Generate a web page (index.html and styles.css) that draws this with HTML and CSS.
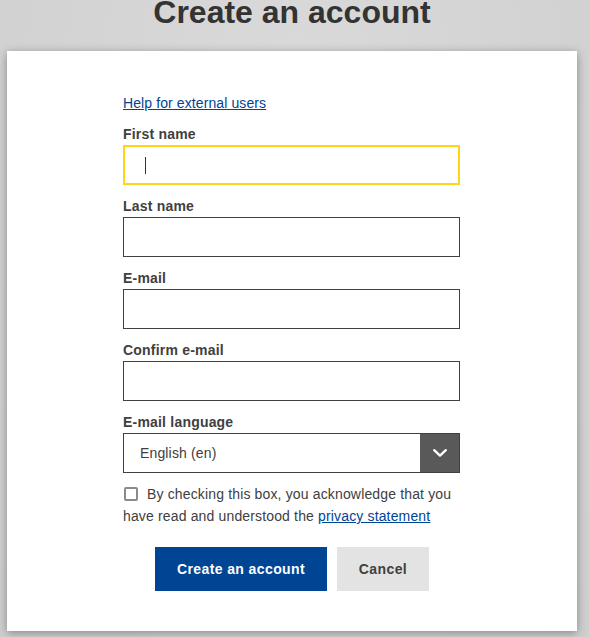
FILE: index.html
```html
<!DOCTYPE html>
<html lang="en">
<head>
<meta charset="utf-8">
<title>Create an account</title>
<link rel="stylesheet" href="styles.css">
</head>
<body>
<div class="page">
  <h1 class="title">Create an account</h1>
  <div class="card">
    <form class="form">
      <a class="help" href="#">Help for external users</a>
      <div class="field">
        <label class="label">First name</label>
        <div class="input focused"><span class="caret"></span></div>
      </div>
      <div class="field">
        <label class="label">Last name</label>
        <div class="input"></div>
      </div>
      <div class="field">
        <label class="label">E-mail</label>
        <div class="input"></div>
      </div>
      <div class="field">
        <label class="label">Confirm e-mail</label>
        <div class="input"></div>
      </div>
      <div class="field">
        <label class="label">E-mail language</label>
        <div class="select">
          <span class="select-value">English (en)</span>
          <span class="select-btn">
            <svg width="14" height="8" viewBox="0 0 14 8"><path d="M1.2 1.2 L7 6.6 L12.8 1.2" fill="none" stroke="#ffffff" stroke-width="2.3" stroke-linecap="round" stroke-linejoin="round"/></svg>
          </span>
        </div>
      </div>
      <p class="consent"><span class="checkbox"></span>By checking this box, you acknowledge that you have read and understood the <a href="#" class="link">privacy statement</a></p>
      <div class="actions">
        <button type="button" class="btn primary">Create an account</button>
        <button type="button" class="btn secondary">Cancel</button>
      </div>
    </form>
  </div>
</div>
</body>
</html>
```
FILE: styles.css
```css
html, body {
  margin: 0;
  padding: 0;
}
body {
  background: radial-gradient(ellipse at 50% 20%, #dadada 0%, #d3d3d3 60%, #cfcfcf 100%);
  font-family: "Liberation Sans", Arial, sans-serif;
  color: #404040;
  height: 637px;
  overflow: hidden;
}
.page {
  width: 570px;
  margin-left: 7px;
}
.title {
  margin: -6px 0 0 0;
  font-size: 32px;
  line-height: 36px;
  font-weight: bold;
  color: #333333;
  text-align: center;
  height: 57px;
}
.card {
  background: #ffffff;
  box-shadow: 0 2px 9px rgba(0, 0, 0, 0.35);
  padding: 42px 0 40px 0;
}
.form {
  width: 337px;
  margin-left: 116px;
  display: flex;
  flex-direction: column;
}
.help {
  font-size: 14px;
  line-height: 20px;
  letter-spacing: 0.1px;
  color: #004494;
  text-decoration: underline;
  align-self: flex-start;
}
.field {
  margin-top: 10px;
  display: flex;
  flex-direction: column;
}
.label {
  font-size: 14px;
  line-height: 22px;
  font-weight: bold;
  letter-spacing: 0.2px;
  color: #404040;
}
.input {
  box-sizing: border-box;
  height: 40px;
  border: 1px solid #404040;
  background: #fff;
  position: relative;
}
.input.focused {
  border: 2px solid #ffd617;
}
.caret {
  position: absolute;
  left: 20px;
  top: 10px;
  width: 1px;
  height: 17px;
  background: #333;
}
.select {
  box-sizing: border-box;
  height: 40px;
  border: 1px solid #404040;
  display: flex;
  align-items: center;
}
.select-value {
  flex: 1;
  padding-left: 16px;
  font-size: 14px;
  letter-spacing: 0.15px;
  color: #404040;
}
.select-btn {
  width: 39px;
  height: 38px;
  background: #595959;
  display: flex;
  align-items: center;
  justify-content: center;
}
.consent {
  margin: 10px 0 0 0;
  font-size: 14px;
  line-height: 22px;
  letter-spacing: 0.15px;
  color: #404040;
}
.checkbox {
  display: inline-block;
  box-sizing: border-box;
  width: 14px;
  height: 14px;
  border: 2px solid #8a8a93;
  border-radius: 2px;
  vertical-align: -2px;
  margin-left: 1px;
  margin-right: 9px;
}
.link {
  color: #004494;
  text-decoration: underline;
}
.actions {
  margin-top: 20px;
  display: flex;
  justify-content: center;
  gap: 10px;
  padding-left: 1px;
}
.btn {
  height: 44px;
  border: none;
  font-family: "Liberation Sans", Arial, sans-serif;
  font-size: 14px;
  font-weight: bold;
  letter-spacing: 0.4px;
  padding: 0;
  cursor: pointer;
}
.primary {
  width: 172px;
  background: #004494;
  color: #ffffff;
}
.secondary {
  width: 92px;
  background: #e3e3e3;
  color: #404040;
}
```
